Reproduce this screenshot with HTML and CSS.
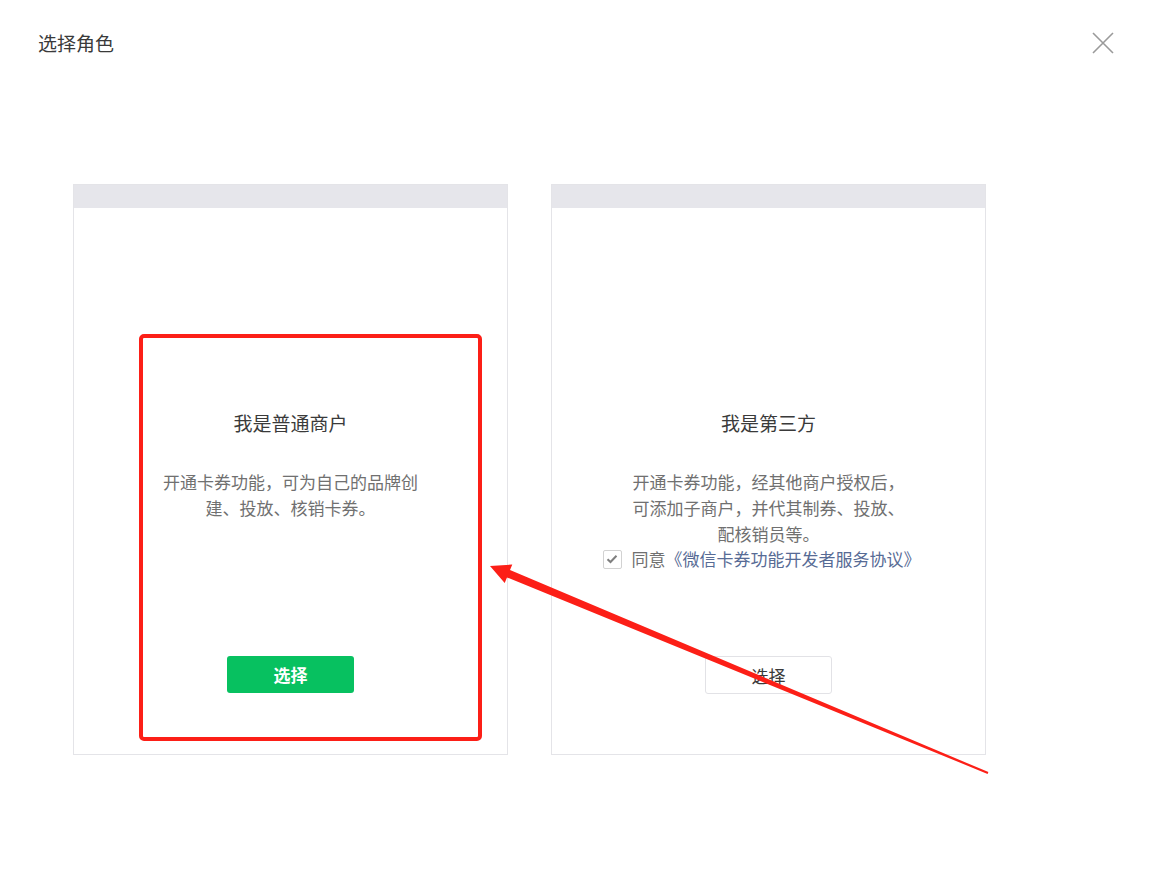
FILE: index.html
```html
<!DOCTYPE html>
<html lang="zh-CN">
<head>
<meta charset="utf-8">
<title>选择角色</title>
<link rel="stylesheet" href="styles.css">
</head>
<body>
<div class="dialog">
  <div class="dialog-head">
    <h1 class="dialog-title">选择角色</h1>
    <span class="close" aria-label="关闭">
      <svg width="22" height="22" viewBox="0 0 22 22"><path d="M1 1L21 21M21 1L1 21" stroke="#9a9a9a" stroke-width="1.6" fill="none"/></svg>
    </span>
  </div>
  <div class="cards">
    <div class="card">
      <div class="card-head"></div>
      <div class="card-body">
        <div class="info">
          <div class="card-title">我是普通商户</div>
          <p class="card-desc">开通卡券功能，可为自己的品牌创建、投放、核销卡券。</p>
        </div>
        <button class="btn btn-primary">选择</button>
      </div>
    </div>
    <div class="card">
      <div class="card-head"></div>
      <div class="card-body">
        <div class="info">
          <div class="card-title">我是第三方</div>
          <p class="card-desc">开通卡券功能，经其他商户授权后，可添加子商户，并代其制券、投放、配核销员等。</p>
          <label class="agree">
            <span class="checkbox">
              <svg width="12" height="10" viewBox="0 0 12 10"><path d="M1.5 5.2L4.5 8L10.5 1.8" stroke="#7f7f7f" stroke-width="2" fill="none"/></svg>
            </span>
            <span>同意<a class="link" href="#">《微信卡券功能开发者服务协议》</a></span>
          </label>
        </div>
        <button class="btn btn-default">选择</button>
      </div>
    </div>
  </div>
</div>
<svg class="annot" width="1150" height="895" viewBox="0 0 1150 895">
  <rect x="141" y="336" width="339" height="403" rx="3" ry="3" fill="none" stroke="#fc1f17" stroke-width="4"/>
  <polygon points="490,566 512.3,564.5 510,570 988.4,772.1 987.6,773.9 507,577.4 504.7,582.9" fill="#fc1f17"/>
</svg>
</body>
</html>
```
FILE: styles.css
```css
* { box-sizing: border-box; }
html, body { margin: 0; padding: 0; background: #fff; }
body {
  font-family: "Noto Sans CJK SC", "Noto Sans", sans-serif;
  color: #3a3a3a;
  width: 1150px;
  height: 895px;
  overflow: hidden;
  position: relative;
}
.dialog-head {
  display: flex;
  justify-content: space-between;
  align-items: center;
  padding: 30px 36px 30px 38px;
}
.dialog-title {
  margin: 0;
  font-size: 19px;
  line-height: 26px;
  font-weight: normal;
  color: #3a3a3a;
}
.close { display: flex; width: 22px; height: 22px; }
.cards {
  display: flex;
  gap: 43px;
  margin-top: 98px;
  padding-left: 73px;
}
.card {
  width: 435px;
  height: 571px;
  border: 1px solid #e4e4e8;
  display: flex;
  flex-direction: column;
}
.card-head {
  height: 23px;
  background: #e6e6eb;
}
.card-body {
  flex: 1;
  display: flex;
  flex-direction: column;
  align-items: center;
}
.info {
  flex: 1;
  display: flex;
  flex-direction: column;
  align-items: center;
  padding-top: 202px;
}
.card-title {
  font-size: 19px;
  line-height: 26px;
  color: #3a3a3a;
}
.card-desc {
  margin: 33px 0 0;
  width: 280px;
  font-size: 17px;
  line-height: 26px;
  color: #707070;
  text-align: center;
}
.agree {
  margin-top: 1px;
  display: flex;
  align-items: center;
  gap: 10px;
  font-size: 17px;
  line-height: 22px;
  color: #707070;
  margin-right: 14px;
}
.checkbox {
  width: 19px;
  height: 19px;
  border: 1px solid #d2d2d2;
  border-radius: 2px;
  display: flex;
  align-items: center;
  justify-content: center;
}
.link { color: #576b95; text-decoration: none; }
.btn {
  width: 127px;
  height: 37px;
  border-radius: 3px;
  font-family: inherit;
  font-size: 17px;
  margin-bottom: 61px;
  padding: 0;
  cursor: pointer;
}
.btn-primary {
  background: #07c160;
  border: none;
  color: #fff;
  font-weight: bold;
}
.btn-default {
  background: #fff;
  border: 1px solid #e2e2e6;
  color: #3a3a3a;
  height: 38px;
  margin-bottom: 60px;
}
.annot {
  position: absolute;
  left: 0;
  top: 0;
  pointer-events: none;
}
```
